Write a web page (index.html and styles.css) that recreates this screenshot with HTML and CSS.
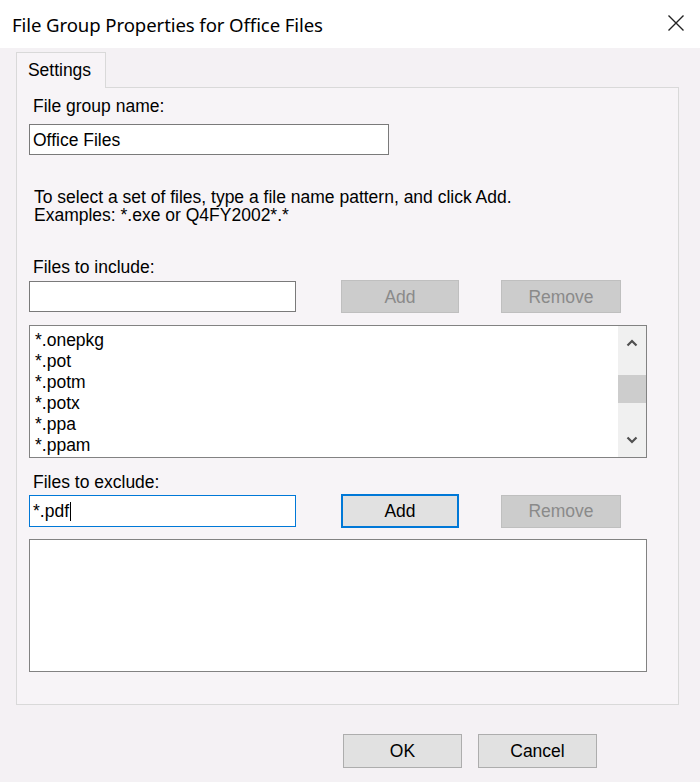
FILE: index.html
```html
<!DOCTYPE html>
<html>
<head>
<meta charset="utf-8">
<title>File Group Properties for Office Files</title>
<link rel="stylesheet" href="styles.css">
</head>
<body>
<div class="window">
  <div class="titlebar">
    <div class="title">File Group Properties for Office Files</div>
    <svg class="close" width="16" height="16" viewBox="0 0 16 16"><path d="M0.5 0.5 L15.5 15.5 M15.5 0.5 L0.5 15.5" stroke="#222" stroke-width="1.4" fill="none"/></svg>
  </div>
  <div class="content">
    <div class="tabs"><div class="tab">Settings</div></div>
    <div class="panel">
      <div class="label">File group name:</div>
      <div class="input wide">Office Files</div>
      <div class="para">To select a set of files, type a file name pattern, and click Add.<br>Examples: *.exe or Q4FY2002*.*</div>
      <div class="label sp-include">Files to include:</div>
      <div class="row r1">
        <div class="input short"></div>
        <div class="btn disabled add">Add</div>
        <div class="btn disabled remove">Remove</div>
      </div>
      <div class="list l1">
        <div class="items">
          <div class="item">*.onepkg</div>
          <div class="item">*.pot</div>
          <div class="item">*.potm</div>
          <div class="item">*.potx</div>
          <div class="item">*.ppa</div>
          <div class="item">*.ppam</div>
        </div>
        <div class="scrollbar">
          <div class="arrow"><svg width="12" height="8" viewBox="0 0 12 8"><path d="M1.5 6.5 L6 2 L10.5 6.5" stroke="#505050" stroke-width="2.2" fill="none"/></svg></div>
          <div class="track"><div class="thumb"></div></div>
          <div class="arrow"><svg width="12" height="8" viewBox="0 0 12 8"><path d="M1.5 1.5 L6 6 L10.5 1.5" stroke="#505050" stroke-width="2.2" fill="none"/></svg></div>
        </div>
      </div>
      <div class="label sp-exclude">Files to exclude:</div>
      <div class="row r2">
        <div class="input short focused">*.pdf<span class="caret"></span></div>
        <div class="btn focusbtn add">Add</div>
        <div class="btn disabled remove">Remove</div>
      </div>
      <div class="list l2"></div>
    </div>
    <div class="footer">
      <div class="btn normal">OK</div>
      <div class="btn normal cancel">Cancel</div>
    </div>
  </div>
</div>
</body>
</html>
```
FILE: styles.css
```css
html, body {
  margin: 0;
  padding: 0;
}
body {
  width: 700px;
  height: 782px;
  overflow: hidden;
  background: #f4f1f4;
  font-family: "Liberation Sans", Arial, sans-serif;
  font-size: 17.5px;
  color: #000;
}
.window {
  width: 700px;
  height: 782px;
  display: flex;
  flex-direction: column;
}
.titlebar {
  height: 48px;
  background: #ffffff;
  display: flex;
  align-items: center;
  justify-content: space-between;
  padding: 0 16px 0 12px;
  box-sizing: border-box;
}
.title {
  font-family: "Noto Sans", "Open Sans", sans-serif;
  font-size: 18.6px;
  color: #000;
  letter-spacing: -0.1px;
}
.close {
  display: block;
  margin-top: -3px;
}
.content {
  flex: 1;
  padding: 4px 21px 0 16px;
  background: #f4f1f4;
}
.tabs {
  display: flex;
  position: relative;
  z-index: 1;
  margin-bottom: -1px;
}
.tab {
  width: 88px;
  height: 34px;
  box-sizing: content-box;
  border: 1px solid #d9d9d9;
  border-bottom: none;
  background: #f7f4f7;
  display: flex;
  align-items: center;
  justify-content: center;
  line-height: 20px;
  padding-bottom: 1px;
  padding-right: 3px;
  width: 85px;
}
.panel {
  height: 618px;
  box-sizing: border-box;
  border: 1px solid #d9d9d9;
  background: #f7f4f7;
  padding: 8px 0 0 12px;
}
.label {
  line-height: 20px;
  padding-left: 4px;
}
.input {
  background: #fff;
  border: 1px solid #7a7a7a;
  box-sizing: border-box;
  height: 31px;
  display: flex;
  align-items: center;
  padding-left: 3px;
  line-height: 20px;
  margin-top: 8px;
}
.wide {
  width: 360px;
}
.para {
  margin-top: 33px;
  line-height: 18px;
  padding-left: 5px;
}
.sp-include {
  margin-top: 33px;
}
.row {
  display: flex;
  align-items: center;
}
.row .input {
  margin-top: 0;
}
.r1 {
  margin-top: 3px;
}
.r2 {
  margin-top: 2px;
}
.short {
  width: 267px;
}
.btn {
  height: 33px;
  box-sizing: border-box;
  display: flex;
  align-items: center;
  justify-content: center;
  line-height: 20px;
}
.add {
  width: 118px;
  margin-left: 45px;
}
.remove {
  width: 120px;
  margin-left: 42px;
}
.disabled {
  background: #cccccc;
  border: 1px solid #bfbfbf;
  color: #8a8a8a;
}
.focusbtn {
  background: #e1e1e1;
  border: 2px solid #0078d7;
  height: 34px;
}
.normal {
  background: #e1e1e1;
  border: 1px solid #adadad;
  width: 119px;
  height: 34px;
}
.focused {
  border-color: #0078d7;
  height: 32px;
}
.caret {
  display: inline-block;
  width: 1px;
  height: 19px;
  background: #000;
  margin-left: 1px;
}
.list {
  background: #fff;
  border: 1px solid #828282;
  box-sizing: border-box;
  width: 618px;
  height: 133px;
}
.l1 {
  margin-top: 12px;
  display: flex;
}
.items {
  flex: 1;
  padding: 4px 0 0 5px;
  line-height: 21px;
  overflow: hidden;
}
.scrollbar {
  width: 28px;
  background: #f0f0f0;
  display: flex;
  flex-direction: column;
}
.arrow {
  height: 34px;
  display: flex;
  align-items: center;
  justify-content: center;
}
.arrow svg {
  display: block;
}
.track {
  flex: 1;
}
.thumb {
  margin-top: 15px;
  height: 28px;
  background: #cdcdcd;
}
.sp-exclude {
  margin-top: 14px;
}
.l2 {
  margin-top: 11px;
}
.footer {
  display: flex;
  justify-content: flex-end;
  padding-right: 82px;
  margin-top: 29px;
}
.cancel {
  margin-left: 16px;
}
```
